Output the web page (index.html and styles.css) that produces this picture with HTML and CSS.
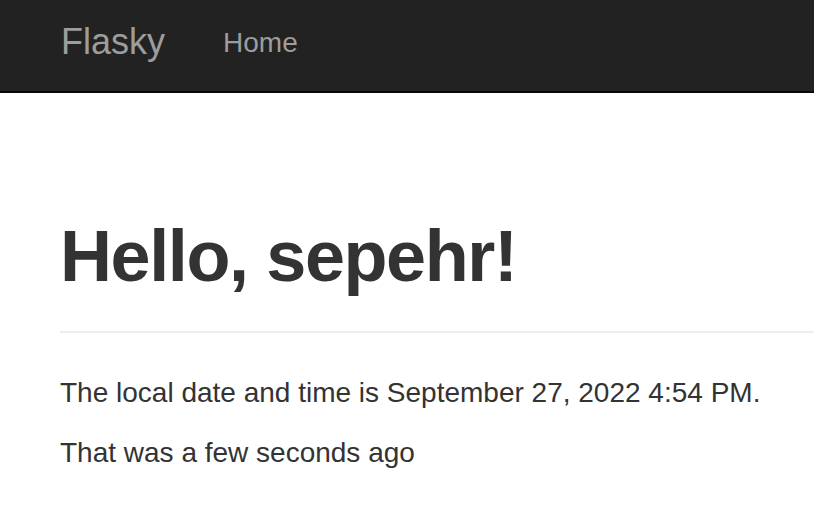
FILE: index.html
```html
<!DOCTYPE html>
<html>
<head>
<meta charset="utf-8">
<title>Flasky</title>
<link rel="stylesheet" href="styles.css">
</head>
<body>
<nav class="navbar">
  <a class="brand" href="#">Flasky</a>
  <a class="nav-link" href="#">Home</a>
</nav>
<main class="container">
  <div class="page-header">
    <h1>Hello, sepehr!</h1>
  </div>
  <p>The local date and time is September 27, 2022 4:54 PM.</p>
  <p>That was a few seconds ago</p>
</main>
</body>
</html>
```
FILE: styles.css
```css
html, body {
  margin: 0;
  padding: 0;
  background: #fff;
  font-family: "Liberation Sans", Arial, Helvetica, sans-serif;
  color: #333;
}
.navbar {
  display: flex;
  align-items: flex-start;
  height: 91px;
  background: #222;
  border-bottom: 2px solid #080808;
  padding-left: 31px;
}
.brand {
  display: block;
  padding: 22px 30px 0 30px;
  font-size: 36px;
  line-height: 40px;
  color: #9d9d9d;
  text-decoration: none;
}
.nav-link {
  display: block;
  padding: 23px 30px 0 28px;
  font-size: 28px;
  line-height: 40px;
  color: #9d9d9d;
  text-decoration: none;
}
.container {
  padding-left: 60px;
}
.page-header {
  margin-top: 124px;
  padding-bottom: 35px;
  border-bottom: 2px solid #eee;
}
h1 {
  margin: 0;
  font-size: 72px;
  line-height: 79px;
  font-weight: 700;
  letter-spacing: -1.4px;
  color: #333;
}
p {
  margin: 0 0 20px 0;
  font-size: 28px;
  line-height: 40px;
}
.page-header + p {
  margin-top: 40px;
}
```
